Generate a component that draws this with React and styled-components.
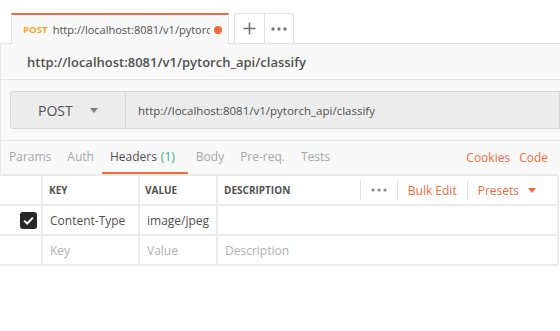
import React from "react";
import styled, { createGlobalStyle } from "styled-components";

const GlobalStyle = createGlobalStyle`
  html, body { margin: 0; padding: 0; background: #ffffff; }
  body { font-family: "Open Sans", "Liberation Sans", sans-serif; color: #505050; }
  * { box-sizing: border-box; }
`;

const Page = styled.div`
  width: 560px;
  height: 331px;
  overflow: hidden;
  background: #ffffff;
`;

const TabStrip = styled.div`
  height: 43px;
  display: flex;
  align-items: flex-end;
  padding-left: 11px;
  gap: 5px;
  background: #ffffff;
`;

const ActiveTab = styled.div`
  width: 218px;
  height: 31px;
  border-top: 2px solid #f26b3a;
  border-left: 1px solid #e2e2e2;
  border-right: 1px solid #e2e2e2;
  background: #f9f9f9;
  display: flex;
  align-items: center;
  padding: 0 0 0 11px;
  margin-bottom: -1px;
  position: relative;
  z-index: 1;
`;

const Method = styled.span`
  font-size: 9.5px;
  font-weight: 700;
  color: ${(p) => p.color || "#f5a623"};
  margin-right: 5px;
  letter-spacing: 0.1px;
`;

const TabUrl = styled.span`
  font-size: 11px;
  color: #505050;
  white-space: nowrap;
  overflow: hidden;
  width: 157px;
  flex: none;
`;

const Dot = styled.span`
  width: 8px;
  height: 8px;
  border-radius: 50%;
  background: #f26b3a;
  margin-left: 4px;
  flex: none;
`;

const IconGroup = styled.div`
  display: flex;
  height: 30px;
  border: 1px solid #e2e2e2;
  border-bottom: none;
  border-radius: 3px 3px 0 0;
  background: #ffffff;
`;

const IconButton = styled.div`
  width: 29px;
  display: flex;
  align-items: center;
  justify-content: center;
  color: #707070;
  & + & { border-left: 1px solid #e2e2e2; }
`;

const Main = styled.div`
  background: #f9f9f9;
  border-top: 1px solid #e2e2e2;
  border-left: 1px solid #e6e6e6;
`;

const TitleRow = styled.div`
  height: 36px;
  display: flex;
  align-items: center;
  padding-left: 26px;
  font-size: 13px;
  font-weight: 600;
  color: #505050;
  border-bottom: 1px solid #e4e4e4;
`;

const RequestRow = styled.div`
  display: flex;
  padding: 11px 0 11px 9px;
  border-bottom: 1px solid #e4e4e4;
`;

const MethodSelect = styled.div`
  width: 116px;
  height: 38px;
  background: #ececec;
  border: 1px solid #d6d6d6;
  border-radius: 3px 0 0 3px;
  display: flex;
  align-items: center;
  padding-left: 27px;
  font-size: 14px;
  color: #505050;
  flex: none;
`;

const Caret = styled.span`
  width: 0;
  height: 0;
  border-left: 4px solid transparent;
  border-right: 4px solid transparent;
  border-top: 5px solid ${(p) => p.color || "#808080"};
  margin-left: ${(p) => p.gap || 17}px;
  display: inline-block;
`;

const UrlInput = styled.div`
  flex: 1;
  height: 38px;
  background: #ececec;
  border: 1px solid #d6d6d6;
  border-left: none;
  display: flex;
  align-items: center;
  padding-left: 12px;
  font-size: 11.5px;
  color: #505050;
`;

const TabsBar = styled.div`
  height: 33px;
  display: flex;
  align-items: stretch;
  padding-left: 0;
  padding-right: 12px;
  font-size: 12px;
`;

const ReqTab = styled.div`
  display: flex;
  align-items: center;
  padding: ${(p) => (p.active ? "0 13px 0 8px" : "0 8px")};
  color: ${(p) => (p.active ? "#505050" : "#a6a6a6")};
  border-bottom: 2px solid ${(p) => (p.active ? "#f26b3a" : "transparent")};
`;

const Count = styled.span`
  color: #26b47f;
  margin-left: 4px;
`;

const Spacer = styled.div`
  flex: 1;
`;

const LinkTab = styled.div`
  display: flex;
  align-items: center;
  color: #f26b3a;
  margin-left: ${(p) => p.ml || 0}px;
`;

const Table = styled.div`
  display: grid;
  grid-template-columns: 41px 95px 76px 1fr;
  grid-auto-rows: 28px;
  gap: 2px;
  background: #ebebeb;
  padding: 2px 2px 2px 0;
  width: 559px;
`;

const Cell = styled.div`
  background: #ffffff;
  display: flex;
  align-items: center;
  padding-left: ${(p) => p.pl ?? 7}px;
  font-size: ${(p) => (p.head ? 10 : 12)}px;
  font-weight: ${(p) => (p.head ? 700 : 400)};
  color: ${(p) => (p.placeholder ? "#b0b0b0" : "#505050")};
  justify-content: ${(p) => (p.end ? "flex-end" : "flex-start")};
  white-space: nowrap;
  overflow: hidden;
`;

const HeadTools = styled.div`
  display: flex;
  align-items: center;
  margin-left: auto;
  padding-right: 11px;
  height: 100%;
`;

const ToolSep = styled.span`
  width: 1px;
  height: 20px;
  background: #e2e2e2;
`;

const ToolLink = styled.span`
  color: #f26b3a;
  font-weight: 400;
  font-size: 12px;
  display: flex;
  align-items: center;
  padding: 0 10px;
`;

const CheckBox = styled.span`
  width: 17px;
  height: 17px;
  border-radius: 3px;
  background: #282828;
  display: flex;
  align-items: center;
  justify-content: center;
  margin-right: 4px;
`;

const Below = styled.div`
  height: 70px;
  background: #ffffff;
`;

export default function App() {
  return (
    <Page>
      <GlobalStyle />
      <TabStrip>
        <ActiveTab>
          <Method>POST</Method>
          <TabUrl>http://localhost:8081/v1/pytorch_api/classify</TabUrl>
          <Dot />
        </ActiveTab>
        <IconGroup>
          <IconButton>
            <svg width="13" height="13" viewBox="0 0 13 13">
              <path d="M6.5 0.5v12M0.5 6.5h12" stroke="#707070" strokeWidth="1.6" />
            </svg>
          </IconButton>
          <IconButton>
            <svg width="16" height="4" viewBox="0 0 16 4">
              <circle cx="2" cy="2" r="1.7" fill="#777" />
              <circle cx="8" cy="2" r="1.7" fill="#777" />
              <circle cx="14" cy="2" r="1.7" fill="#777" />
            </svg>
          </IconButton>
        </IconGroup>
      </TabStrip>
      <Main>
        <TitleRow>http://localhost:8081/v1/pytorch_api/classify</TitleRow>
        <RequestRow>
          <MethodSelect>
            POST
            <Caret />
          </MethodSelect>
          <UrlInput>http://localhost:8081/v1/pytorch_api/classify</UrlInput>
        </RequestRow>
        <TabsBar>
          <ReqTab>Params</ReqTab>
          <ReqTab>Auth</ReqTab>
          <ReqTab active>
            Headers<Count>(1)</Count>
          </ReqTab>
          <ReqTab>Body</ReqTab>
          <ReqTab>Pre-req.</ReqTab>
          <ReqTab>Tests</ReqTab>
          <Spacer />
          <LinkTab>Cookies</LinkTab>
          <LinkTab ml={9}>Code</LinkTab>
        </TabsBar>
      </Main>
      <Table>
        <Cell />
        <Cell head pl={6}>KEY</Cell>
        <Cell head pl={5}>VALUE</Cell>
        <Cell head pl={6}>
          DESCRIPTION
          <HeadTools>
            <ToolSep />
            <ToolLink>
              <svg width="16" height="4" viewBox="0 0 16 4">
                <circle cx="2" cy="2" r="1.6" fill="#888" />
                <circle cx="8" cy="2" r="1.6" fill="#888" />
                <circle cx="14" cy="2" r="1.6" fill="#888" />
              </svg>
            </ToolLink>
            <ToolSep />
            <ToolLink>Bulk Edit</ToolLink>
            <ToolSep />
            <ToolLink>
              Presets
              <Caret color="#f26b3a" gap={9} />
            </ToolLink>
          </HeadTools>
        </Cell>
        <Cell end pl={0}>
          <CheckBox>
            <svg width="11" height="9" viewBox="0 0 11 9">
              <path d="M1.2 4.6l3 3 5.6-6" stroke="#fff" strokeWidth="2" fill="none" />
            </svg>
          </CheckBox>
        </Cell>
        <Cell>Content-Type</Cell>
        <Cell>image/jpeg</Cell>
        <Cell />
        <Cell />
        <Cell placeholder>Key</Cell>
        <Cell placeholder>Value</Cell>
        <Cell placeholder>Description</Cell>
      </Table>
      <Below />
    </Page>
  );
}
